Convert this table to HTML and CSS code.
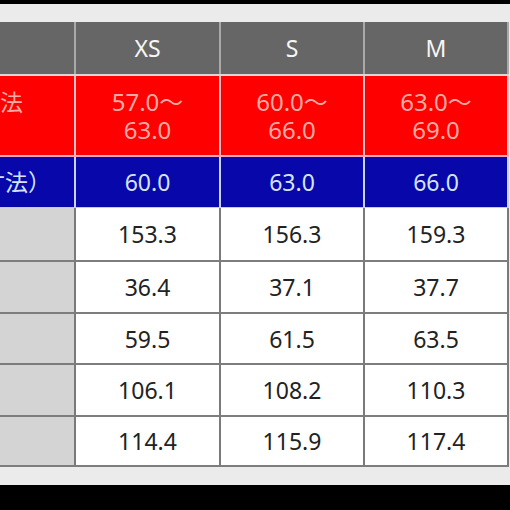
FILE: index.html
```html
<!DOCTYPE html>
<html lang="ja">
<head>
<meta charset="utf-8">
<link rel="stylesheet" href="styles.css">
</head>
<body>
<div class="screen">
  <div class="bar"></div>
  <div class="sheet">
    <div class="table">
      <div class="row head">
        <div class="cell label"></div>
        <div class="cell">XS</div>
        <div class="cell">S</div>
        <div class="cell">M</div>
      </div>
      <div class="row red">
        <div class="cell label"><span class="lab">ヌード寸法</span></div>
        <div class="cell"><span class="two">57.0～<br>63.0</span></div>
        <div class="cell"><span class="two">60.0～<br>66.0</span></div>
        <div class="cell"><span class="two">63.0～<br>69.0</span></div>
      </div>
      <div class="row blue">
        <div class="cell label"><span class="lab">（ヌード寸法）</span></div>
        <div class="cell">60.0</div>
        <div class="cell">63.0</div>
        <div class="cell">66.0</div>
      </div>
      <div class="row white r1">
        <div class="cell label"></div>
        <div class="cell">153.3</div>
        <div class="cell">156.3</div>
        <div class="cell">159.3</div>
      </div>
      <div class="row white r2">
        <div class="cell label"></div>
        <div class="cell">36.4</div>
        <div class="cell">37.1</div>
        <div class="cell">37.7</div>
      </div>
      <div class="row white r3">
        <div class="cell label"></div>
        <div class="cell">59.5</div>
        <div class="cell">61.5</div>
        <div class="cell">63.5</div>
      </div>
      <div class="row white r4">
        <div class="cell label"></div>
        <div class="cell">106.1</div>
        <div class="cell">108.2</div>
        <div class="cell">110.3</div>
      </div>
      <div class="row white r5">
        <div class="cell label"></div>
        <div class="cell">114.4</div>
        <div class="cell">115.9</div>
        <div class="cell">117.4</div>
      </div>
    </div>
  </div>
</div>
</body>
</html>
```

FILE: styles.css
```css
html, body {
  margin: 0;
  padding: 0;
  background: #000;
}
.screen {
  width: 510px;
  height: 510px;
  background: #000;
  overflow: hidden;
  font-family: "Noto Sans", "Noto Sans CJK JP", sans-serif;
}
.bar {
  height: 4px;
  background: #000;
}
.sheet {
  background: #ebebeb;
  padding-top: 18px;
  height: 463px;
}
.table {
  display: flex;
  flex-direction: column;
  width: 509px;
}
.row {
  display: grid;
  grid-template-columns: 74px 143px 142px 142px;
  column-gap: 2px;
  padding-right: 2px;
  border-bottom: 2px solid;
}
.cell {
  display: flex;
  align-items: center;
  justify-content: center;
  text-align: center;
  font-size: 23px;
  line-height: 28px;
  overflow: hidden;
  white-space: nowrap;
}
.cell.label {
  justify-content: flex-end;
}
.lab {
  display: block;
}
.two {
  display: block;
  line-height: 28px;
}
.head {
  height: 52px;
  background: #a9a9a9;
  border-bottom-color: #d8d8d8;
}
.head .cell {
  background: #666666;
  color: #f6f6f6;
}
.red {
  height: 79px;
  background: #f6c0c8;
  border-bottom-color: #f7a8c0;
}
.red .cell {
  background: #ff0000;
  color: #ffaaa2;
  font-size: 24px;
}
.red .label {
  align-items: flex-start;
  padding-top: 12px;
  padding-right: 51px;
  font-size: 23px;
}
.blue {
  height: 50px;
  background: #c8d4ff;
  border-bottom-color: #c0c8f0;
  border-bottom-width: 1px;
}
.blue .cell {
  background: #0707aa;
  color: #d4e4ff;
}
.blue .label {
  padding-right: 23px;
}
.white {
  background: #7a7a7a;
  border-bottom-color: #7d7d7d;
}
.white .cell {
  background: #ffffff;
  color: #222222;
}
.white .label {
  background: #d4d4d4;
}
.r1 { height: 52px; }
.r2 { height: 50px; }
.r3 { height: 49px; }
.r4 { height: 50px; }
.r5 { height: 48px; }
```
